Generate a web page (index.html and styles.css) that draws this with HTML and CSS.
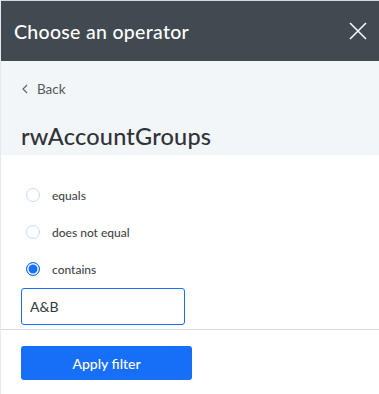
FILE: index.html
```html
<!DOCTYPE html>
<html lang="en">
<head>
  <meta charset="UTF-8">
  <title>Choose an operator</title>
  <link rel="stylesheet" href="styles.css">
</head>
<body>
  <div class="panel">
    <div class="panel-header">
      <h2>Choose an operator</h2>
      <button class="close-btn" aria-label="Close">
        <svg width="18" height="18" viewBox="0 0 18 18"><path d="M1 1 L17 17 M17 1 L1 17" stroke="#fff" stroke-width="1.5" fill="none"/></svg>
      </button>
    </div>
    <div class="panel-intro">
      <a class="back-link" href="#">
        <svg width="6" height="10" viewBox="0 0 6 10"><path d="M5 1 L1 5 L5 9" stroke="#666" stroke-width="1.2" fill="none"/></svg>
        Back
      </a>
      <h1>rwAccountGroups</h1>
    </div>
    <div class="panel-body">
      <label class="option"><span class="radio"></span>equals</label>
      <label class="option"><span class="radio"></span>does not equal</label>
      <label class="option"><span class="radio checked"></span>contains</label>
      <input class="value-input" type="text" value="A&amp;B">
    </div>
    <div class="panel-footer">
      <button class="apply-btn">Apply filter</button>
    </div>
  </div>
</body>
</html>
```

FILE: styles.css
```css
body {
  margin: 0;
  font-family: Lato, "Open Sans", sans-serif;
  background: #fff;
}
.panel {
  width: 379px;
  height: 394px;
  border-top: 1px solid #d6d9dc;
  border-left: 1px solid #e6ebf0;
  box-sizing: border-box;
}
.panel-header {
  height: 60px;
  background-color: #414951;
  display: flex;
  align-items: center;
  justify-content: space-between;
  padding: 0 12px 0 13px;
}
.panel-header h2 {
  margin: 0;
  color: #fff;
  font-size: 19.5px;
  font-weight: 500;
  letter-spacing: 0.3px;
}
.close-btn {
  background: none;
  border: none;
  padding: 0;
  width: 18px;
  height: 18px;
  cursor: pointer;
}
.close-btn svg {
  display: block;
}
.panel-intro {
  background-color: #f2f6f9;
  padding: 20px 20px 0;
  height: 94px;
  box-sizing: border-box;
}
.back-link {
  display: flex;
  align-items: center;
  gap: 9px;
  padding-left: 1px;
  color: #555a60;
  font-size: 13.5px;
  text-decoration: none;
  height: 15px;
}
.panel-intro h1 {
  margin: 26px 0 0;
  font-size: 23.5px;
  font-weight: 500;
  color: #2f3337;
  letter-spacing: 0.2px;
}
.panel-body {
  padding: 29px 20px 4px;
  display: flex;
  flex-direction: column;
  align-items: flex-start;
}
.option {
  display: flex;
  align-items: center;
  gap: 12px;
  height: 22px;
  margin-bottom: 15px;
  padding-left: 5px;
  font-size: 12px;
  font-weight: 500;
  color: #42474c;
}
.option:last-of-type {
  margin-bottom: 8px;
}
.radio {
  width: 14px;
  height: 14px;
  border-radius: 50%;
  border: 1px solid #c6ddfb;
  box-sizing: border-box;
  background: #fff;
}
.radio.checked {
  border: 1.5px solid #176ef7;
  box-shadow: inset 0 0 0 1.5px #fff;
  background: #176ef7;
}
.value-input {
  width: 164px;
  height: 37px;
  box-sizing: border-box;
  border: 1px solid #176ef7;
  border-radius: 3px;
  padding: 0 8px;
  font-family: inherit;
  font-size: 14px;
  color: #33373b;
  outline: none;
}
.panel-footer {
  border-top: 1px solid #d9dbdd;
  padding: 16px 20px;
}
.apply-btn {
  width: 171px;
  height: 34px;
  background-color: #176ef7;
  border: none;
  border-radius: 3px;
  color: #fff;
  font-family: inherit;
  font-size: 14px;
  font-weight: 500;
  cursor: pointer;
}
```
